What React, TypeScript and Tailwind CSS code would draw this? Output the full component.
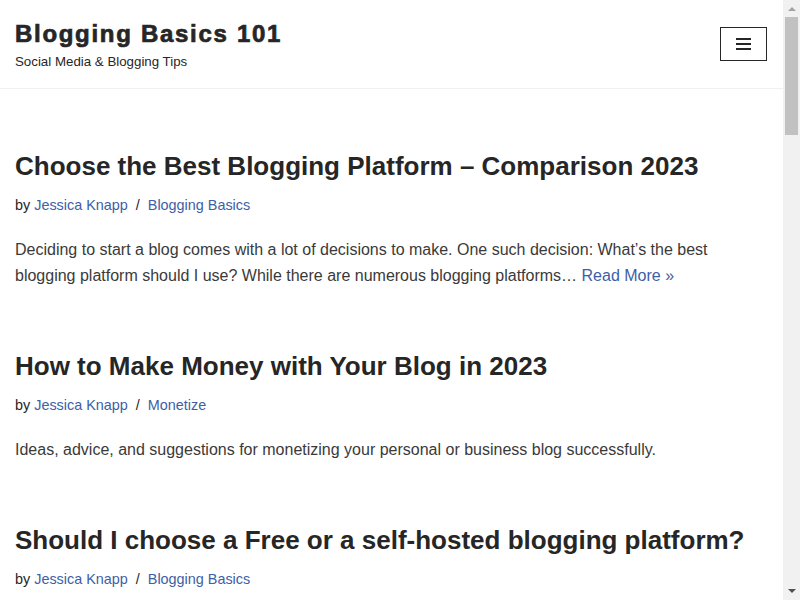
export default function App() {
  const posts = [
    {
      title: 'Choose the Best Blogging Platform – Comparison 2023',
      category: 'Blogging Basics',
      excerpt:
        'Deciding to start a blog comes with a lot of decisions to make. One such decision: What’s the best blogging platform should I use? While there are numerous blogging platforms…',
      more: true,
    },
    {
      title: 'How to Make Money with Your Blog in 2023',
      category: 'Monetize',
      excerpt: 'Ideas, advice, and suggestions for monetizing your personal or business blog successfully.',
      more: false,
    },
    {
      title: 'Should I choose a Free or a self-hosted blogging platform?',
      category: 'Blogging Basics',
      excerpt: '',
      more: false,
    },
  ]

  return (
    <div className="flex h-[600px] overflow-hidden bg-white font-[family-name:'Liberation_Sans',Arial,sans-serif] text-[#3a3a3a]">
      <div className="min-w-0 flex-1">
        <header className="flex items-start justify-between border-b border-[#f0f0f0] pb-[17px] pl-[15px] pr-4 pt-[19px]">
          <div>
            <h1 className="text-[24px] font-bold leading-[30px] tracking-[1.7px] text-[#272626] [-webkit-text-stroke:0.7px_#272626]">
              Blogging Basics 101
            </h1>
            <p className="mt-1 text-[13.3px] leading-[18px] text-[#272626]">Social Media &amp; Blogging Tips</p>
          </div>
          <button className="mt-2 flex h-[34px] w-[47px] flex-col items-center justify-center gap-[3px] border border-[#272626]">
            <span className="h-[2px] w-[15px] bg-[#272626]" />
            <span className="h-[2px] w-[15px] bg-[#272626]" />
            <span className="h-[2px] w-[15px] bg-[#272626]" />
          </button>
        </header>

        <main className="px-[15px] pt-[60px]">
          {posts.map((p) => (
            <article key={p.title} className="mb-[60px]">
              <h2 className="text-[26px] font-bold leading-[34px] text-[#272626]">{p.title}</h2>
              <p className="mt-[12px] text-[14.4px] leading-[20px] text-[#272626]">
                by <a className="text-[#3e5ea6]">Jessica Knapp</a>
                <span className="mx-[8px]">/</span>
                <a className="text-[#3e5ea6]">{p.category}</a>
              </p>
              {p.excerpt && (
                <p className="mt-[22px] text-[16px] leading-[26px]">
                  {p.excerpt}
                  {p.more && <a className="text-[#3e5ea6]"> Read More »</a>}
                </p>
              )}
            </article>
          ))}
        </main>
      </div>

      {/* scrollbar */}
      <div className="flex w-[17px] shrink-0 flex-col items-center bg-[#f1f1f1]">
        <div className="flex h-[17px] w-full items-center justify-center">
          <svg width="8" height="5" viewBox="0 0 8 5">
            <path d="M0 5 L4 1 L8 5 Z" fill="#a3a3a3" />
          </svg>
        </div>
        <div className="h-[118px] w-[13px] bg-[#c1c1c1]" />
        <div className="flex-1" />
        <div className="flex h-[17px] w-full items-center justify-center">
          <svg width="8" height="5" viewBox="0 0 8 5">
            <path d="M0 0 L8 0 L4 4 Z" fill="#505050" />
          </svg>
        </div>
      </div>
    </div>
  )
}
